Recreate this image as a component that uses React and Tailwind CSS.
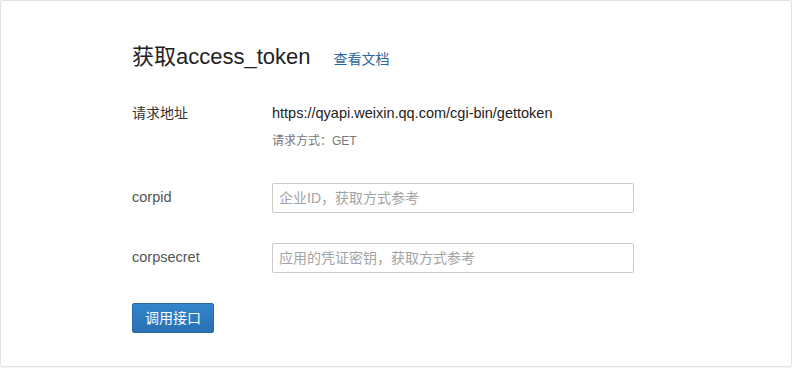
export default function App() {
    return (
        <div className="w-[792px] h-[368px] bg-[#f3f3f3]" style={{ fontFamily: '"Liberation Sans", "Noto Sans CJK SC", sans-serif' }}>
            <div className="w-[792px] h-[367px] bg-white border border-[#e2e2e2] rounded-[3px] pl-[131px] pt-[42px]">
                <div className="flex items-baseline h-[28px]">
                    <h1 className="text-[22px] leading-[28px] text-[#222]">获取access_token</h1>
                    <a className="ml-[23px] text-[14px] text-[#2a66a0]">查看文档</a>
                </div>

                <div className="flex mt-[32px]">
                    <div className="w-[140px] text-[14px] leading-[20px] text-[#333]">请求地址</div>
                    <div>
                        <div className="text-[14.5px] leading-[20px] text-[#222]">https://qyapi.weixin.qq.com/cgi-bin/gettoken</div>
                        <div className="mt-[9px] text-[12px] leading-[18px] text-[#777]">请求方式：GET</div>
                    </div>
                </div>

                <div className="flex items-center mt-[33px]">
                    <div className="w-[140px] text-[14.5px] text-[#555]">corpid</div>
                    <input className="w-[362px] h-[30px] border border-[#ccc] rounded-[2px] px-[6px] text-[14px] outline-none placeholder:text-[#a3a3a3]" placeholder="企业ID，获取方式参考" />
                </div>

                <div className="flex items-center mt-[30px]">
                    <div className="w-[140px] text-[14.5px] text-[#555]">corpsecret</div>
                    <input className="w-[362px] h-[30px] border border-[#ccc] rounded-[2px] px-[6px] text-[14px] outline-none placeholder:text-[#a3a3a3]" placeholder="应用的凭证密钥，获取方式参考" />
                </div>

                <button className="mt-[30px] w-[82px] h-[30px] rounded-[2px] bg-gradient-to-b from-[#3286cc] to-[#2870b2] border border-[#2a6aa8] text-white text-[14px]">调用接口</button>
            </div>
        </div>
    );
}
